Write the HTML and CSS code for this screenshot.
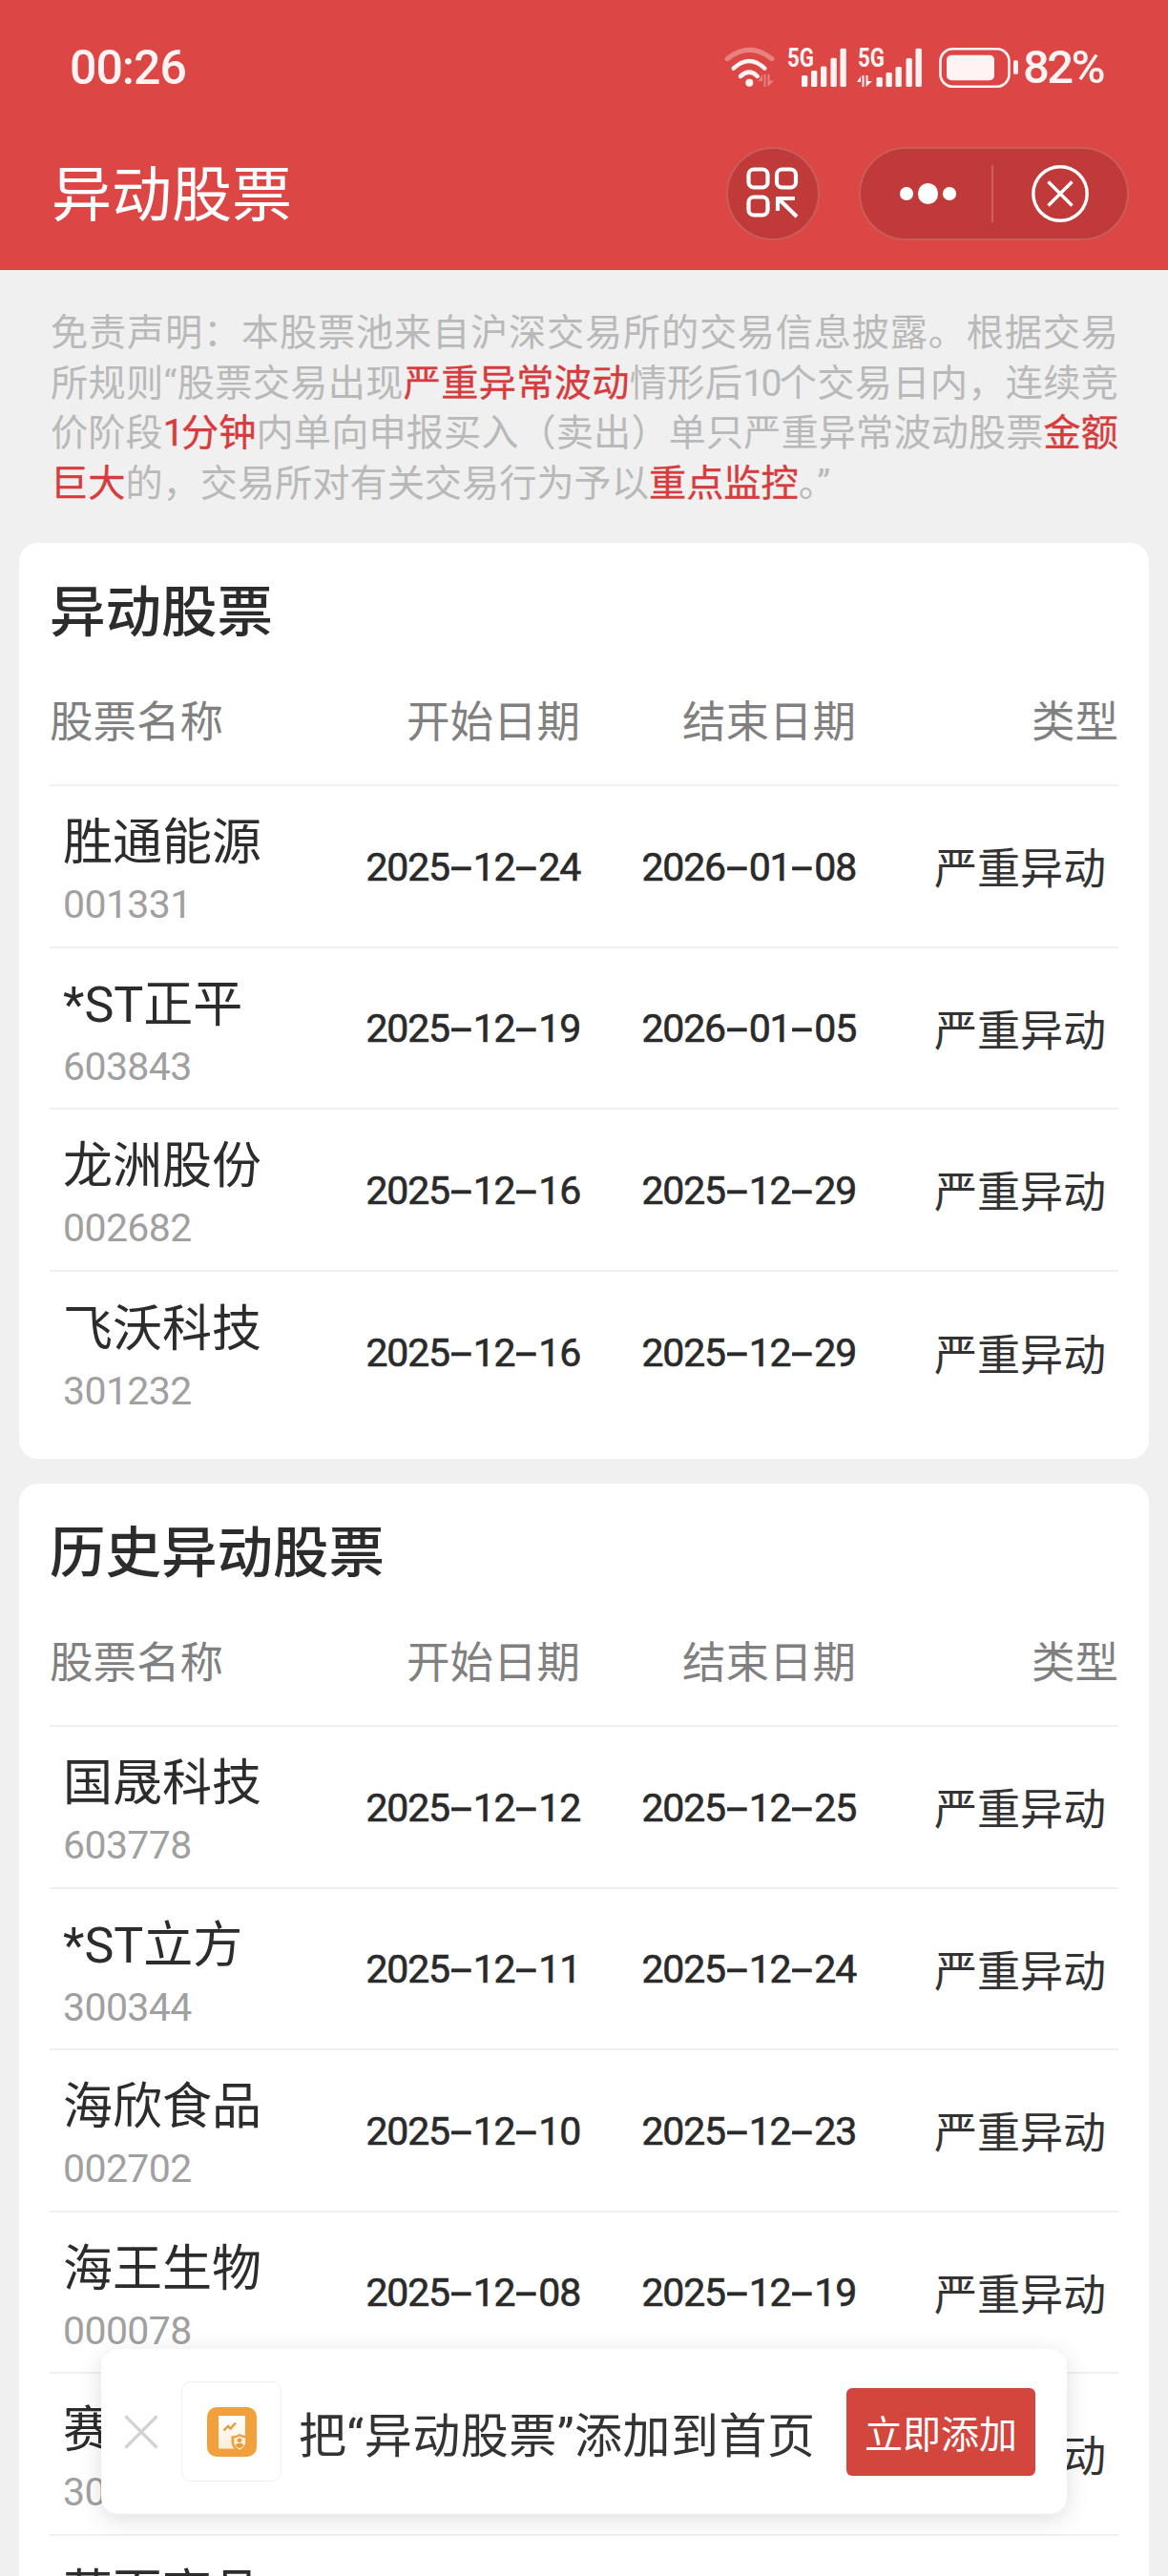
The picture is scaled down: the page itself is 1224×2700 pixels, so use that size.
FILE: index.html
```html
<!DOCTYPE html>
<html lang="zh-CN">
<head>
<meta charset="utf-8">
<title>异动股票</title>
<link rel="stylesheet" href="styles.css">
</head>
<body>
<div class="page">
  <header class="header">
    <div class="status">
      <span class="time">00:26</span>
      <div class="status-icons">
        <svg class="ic-wifi" width="56" height="42" viewBox="0 0 56 42">
          <path d="M4 11.7Q27.5-7 51 11.7" fill="none" stroke="#fff3f3" stroke-width="5" stroke-linecap="round" opacity=".35"/>
          <path d="M10.7 21.7Q27.3 6.3 43.3 21.7" fill="none" stroke="#fff3f3" stroke-width="4.5" stroke-linecap="round"/>
          <path d="M18 30Q27.3 21.4 35.7 30" fill="none" stroke="#fff3f3" stroke-width="4.5" stroke-linecap="round"/>
          <circle cx="27.3" cy="36.7" r="4" fill="#fff3f3"/>
          <path d="M42.5 28V41H44.5V28ZM41 28L36.5 35H41ZM46.5 28V41L53 34.5H48.5V28Z" fill="#fff3f3" opacity=".35"/>
        </svg>
        <svg class="ic-sig" width="62" height="42" viewBox="0 0 62 42">
          <text x="0" y="20" class="five-g" textLength="28" lengthAdjust="spacingAndGlyphs">5G</text>
          <rect x="15" y="29" width="6.3" height="12" rx="1.5" fill="#fff3f3"/>
          <rect x="25" y="24" width="6.3" height="17" rx="1.5" fill="#fff3f3"/>
          <rect x="35" y="19.5" width="6.3" height="21.5" rx="1.5" fill="#fff3f3"/>
          <rect x="45.5" y="10.7" width="6.3" height="30.3" rx="1.5" fill="#fff3f3"/>
          <rect x="55.5" y="0.7" width="6.3" height="40.3" rx="1.5" fill="#fff3f3"/>
        </svg>
        <svg class="ic-sig" width="70" height="42" viewBox="0 0 70 42">
          <text x="1" y="20" class="five-g" textLength="28" lengthAdjust="spacingAndGlyphs">5G</text>
          <path d="M5.5 29V41H7.5V29ZM4 30L0 36H4ZM9.5 29V41L16 35H11.5V29Z" fill="#fff3f3"/>
          <rect x="20.5" y="31" width="6.3" height="10" rx="1.5" fill="#fff3f3"/>
          <rect x="30.5" y="26" width="6.3" height="15" rx="1.5" fill="#fff3f3"/>
          <rect x="40.5" y="20" width="6.3" height="21" rx="1.5" fill="#fff3f3"/>
          <rect x="51.5" y="11" width="6.3" height="30" rx="1.5" fill="#fff3f3"/>
          <rect x="61.5" y="0.7" width="6.3" height="40.3" rx="1.5" fill="#fff3f3"/>
        </svg>
        <svg class="ic-bat" width="84" height="42" viewBox="0 0 84 42">
          <rect x="1.5" y="1.2" width="72" height="39.6" rx="13" fill="none" stroke="#fff3f3" stroke-width="2.6"/>
          <rect x="8" y="7.7" width="50" height="26.6" rx="5" fill="#fff3f3"/>
          <rect x="78" y="13" width="5" height="15" rx="2.5" fill="#fff3f3"/>
        </svg>
        <span class="pct">82%</span>
      </div>
    </div>
    <div class="nav">
      <h1 class="nav-title">异动股票</h1>
      <div class="nav-actions">
        <div class="round-btn">
          <svg width="56" height="56" viewBox="0 0 56 56" fill="none" stroke="#fff" stroke-width="4.2">
            <rect x="2.5" y="2.5" width="20" height="19" rx="5.5"/>
            <rect x="32" y="2.5" width="20" height="19" rx="5.5"/>
            <rect x="2.5" y="31.5" width="20" height="19" rx="5.5"/>
            <path d="M31.5 33H51M33 31.5V46M33.5 33L53 52"/>
          </svg>
        </div>
        <div class="capsule">
          <div class="cap-dots">
            <span class="dot"></span><span class="dot big"></span><span class="dot"></span>
          </div>
          <span class="cap-sep"></span>
          <div class="cap-close">
            <svg width="60" height="60" viewBox="0 0 60 60" fill="none" stroke="#fff" stroke-width="3.4">
              <circle cx="30" cy="30" r="28.2"/>
              <path d="M17.5 17.5L42.5 42.5M42.5 17.5L17.5 42.5"/>
            </svg>
          </div>
        </div>
      </div>
    </div>
  </header>

  <p class="notice">免责声明&#xFF1A;本股票池来自沪深交易所的交易信息披露&#x3002;根据交易所规则&#x201C;股票交易出现<em>严重异常波动</em>情形后<span class="num">10</span>个交易日内&#xFF0C;连续竞价阶段<em><span class="num">1</span>分钟</em>内单向申报买入&#xFF08;卖出&#xFF09;单只严重异常波动股票<em>金额巨大</em>的&#xFF0C;交易所对有关交易行为予以<em>重点监控</em>&#x3002;&#x201D;</p>

  <section class="card">
    <h2 class="card-title">异动股票</h2>
    <div class="grid thead"><span>股票名称</span><span>开始日期</span><span>结束日期</span><span>类型</span></div>
    <div class="grid row">
      <div class="stock"><span class="name">胜通能源</span><span class="code">001331</span></div>
      <span class="date">2025<i>-</i>12<i>-</i>24</span><span class="date">2026<i>-</i>01<i>-</i>08</span><span class="type">严重异动</span>
    </div>
    <div class="grid row">
      <div class="stock"><span class="name">*ST正平</span><span class="code">603843</span></div>
      <span class="date">2025<i>-</i>12<i>-</i>19</span><span class="date">2026<i>-</i>01<i>-</i>05</span><span class="type">严重异动</span>
    </div>
    <div class="grid row">
      <div class="stock"><span class="name">龙洲股份</span><span class="code">002682</span></div>
      <span class="date">2025<i>-</i>12<i>-</i>16</span><span class="date">2025<i>-</i>12<i>-</i>29</span><span class="type">严重异动</span>
    </div>
    <div class="grid row">
      <div class="stock"><span class="name">飞沃科技</span><span class="code">301232</span></div>
      <span class="date">2025<i>-</i>12<i>-</i>16</span><span class="date">2025<i>-</i>12<i>-</i>29</span><span class="type">严重异动</span>
    </div>
  </section>

  <section class="card">
    <h2 class="card-title">历史异动股票</h2>
    <div class="grid thead"><span>股票名称</span><span>开始日期</span><span>结束日期</span><span>类型</span></div>
    <div class="grid row">
      <div class="stock"><span class="name">国晟科技</span><span class="code">603778</span></div>
      <span class="date">2025<i>-</i>12<i>-</i>12</span><span class="date">2025<i>-</i>12<i>-</i>25</span><span class="type">严重异动</span>
    </div>
    <div class="grid row">
      <div class="stock"><span class="name">*ST立方</span><span class="code">300344</span></div>
      <span class="date">2025<i>-</i>12<i>-</i>11</span><span class="date">2025<i>-</i>12<i>-</i>24</span><span class="type">严重异动</span>
    </div>
    <div class="grid row">
      <div class="stock"><span class="name">海欣食品</span><span class="code">002702</span></div>
      <span class="date">2025<i>-</i>12<i>-</i>10</span><span class="date">2025<i>-</i>12<i>-</i>23</span><span class="type">严重异动</span>
    </div>
    <div class="grid row">
      <div class="stock"><span class="name">海王生物</span><span class="code">000078</span></div>
      <span class="date">2025<i>-</i>12<i>-</i>08</span><span class="date">2025<i>-</i>12<i>-</i>19</span><span class="type">严重异动</span>
    </div>
    <div class="grid row">
      <div class="stock"><span class="name">赛微电子</span><span class="code">300456</span></div>
      <span class="date">2025<i>-</i>12<i>-</i>05</span><span class="date">2025<i>-</i>12<i>-</i>18</span><span class="type">严重异动</span>
    </div>
    <div class="grid row">
      <div class="stock"><span class="name">萃百高品</span><span class="code">300000</span></div>
      <span class="date">2025<i>-</i>12<i>-</i>04</span><span class="date">2025<i>-</i>12<i>-</i>17</span><span class="type">严重异动</span>
    </div>
  </section>

  <aside class="toast">
    <svg class="toast-x" width="38" height="38" viewBox="0 0 38 38" fill="none" stroke="#d2d2d2" stroke-width="3.2"><path d="M2.5 2.5L35.5 35.5M35.5 2.5L2.5 35.5"/></svg>
    <div class="app-box">
      <svg width="52" height="52" viewBox="0 0 52 52">
        <defs><linearGradient id="doc" x1="0" y1="0" x2="0" y2="1"><stop offset="0" stop-color="#fff"/><stop offset="1" stop-color="#fdeedb"/></linearGradient></defs>
        <rect width="52" height="52" rx="10" fill="#f1a03b"/>
        <rect x="12" y="9" width="28" height="34.5" fill="url(#doc)"/>
        <path d="M17.5 24.5L22 20L24.5 22.5L30 16.5" fill="none" stroke="#e99a3b" stroke-width="2.4"/>
        <path d="M25.5 30.5Q31 30 34 28Q37.5 30 43 30.5V37Q42.5 43.5 34 47.5Q26 43.5 25.5 37Z" fill="#f1a03b"/>
        <path d="M28.2 32.5Q31.5 32 34 30.5Q37 32 40.3 32.5V37Q40 41.5 34 44.7Q28.5 41.5 28.2 37Z" fill="#fdeedb"/>
        <circle cx="34" cy="34.8" r="2.3" fill="#e99a3b"/>
        <path d="M29.8 40.5Q30.5 37.8 34 37.8Q37.5 37.8 38.5 40.5L34 43.2Z" fill="#e99a3b"/>
      </svg>
    </div>
    <span class="toast-text">把&#x201C;异动股票&#x201D;添加到首页</span>
    <span class="toast-btn">立即添加</span>
  </aside>
</div>
</body>
</html>
```

FILE: styles.css
```css
* { box-sizing: border-box; }
html, body { margin: 0; padding: 0; }
body {
  background: #f0f0f0;
  font-family: Roboto, "Noto Sans CJK SC", sans-serif;
}
.page {
  position: relative;
  width: 1224px;
  height: 2700px;
  overflow: hidden;
  background: #f0f0f0;
}
svg { overflow: visible; }

/* header */
.header {
  height: 283px;
  background: #dc4644;
  padding-top: 50px;
  color: #fff;
}
.status {
  display: flex;
  justify-content: space-between;
  align-items: center;
  height: 42px;
  padding: 0 68px 0 73px;
}
.time {
  font-size: 50px;
  font-weight: 500;
  letter-spacing: -1px;
  line-height: 44px;
  color: #fff3f3;
}
.status-icons {
  display: flex;
  align-items: center;
}
.ic-wifi { margin-right: 11px; }
.ic-sig { margin-right: 11px; }
.ic-sig + .ic-sig { margin-right: 16px; }
.ic-bat { margin-right: 4px; }
.pct {
  font-size: 49px;
  font-weight: 500;
  letter-spacing: -2.6px;
  line-height: 42px;
  color: #fff3f3;
}
.five-g {
  font-family: Roboto, sans-serif;
  font-size: 27px;
  font-weight: 700;
  fill: #fff3f3;
}
.nav {
  display: flex;
  justify-content: space-between;
  align-items: center;
  height: 98px;
  margin-top: 62px;
  padding: 0 41px 0 54px;
}
.nav-title {
  margin: 0;
  padding-top: 4px;
  font-size: 63px;
  font-weight: 400;
  line-height: 98px;
}
.nav-actions {
  display: flex;
  gap: 41px;
}
.round-btn, .capsule {
  height: 98px;
  background: #bf3a38;
  border: 2px solid rgba(255, 255, 255, .18);
  border-radius: 49px;
  display: flex;
  align-items: center;
  justify-content: center;
}
.round-btn { width: 98px; }
.capsule { width: 283px; justify-content: flex-start; }
.cap-dots {
  display: flex;
  align-items: center;
  justify-content: center;
  width: 137px;
  padding-left: 4px;
  gap: 5px;
}
.dot {
  width: 13.5px;
  height: 13.5px;
  border-radius: 50%;
  background: #fff;
}
.dot.big { width: 21.5px; height: 21.5px; }
.cap-sep {
  width: 2px;
  height: 60px;
  background: rgba(255, 255, 255, .2);
}
.cap-close {
  flex: 1;
  display: flex;
  align-items: center;
  justify-content: center;
}

/* notice */
.notice {
  margin: 0;
  padding: 40px 52px 36px 53px;
  font-size: 39.2px;
  line-height: 52.5px;
  text-align: justify;
  color: #b9b9b9;
}
.notice em {
  font-style: normal;
  -webkit-text-stroke: .35px #d63c3e;
  color: #d63c3e;
}
.num { letter-spacing: -3px; }

/* cards */
.card {
  margin: 0 20px 26px;
  padding: 31px 32px 27px;
  background: #fff;
  border-radius: 20px;
}
.card-title {
  margin: 0;
  font-size: 58.5px;
  font-weight: 500;
  line-height: 84px;
  color: #2c2c2c;
}
.grid {
  display: grid;
  grid-template-columns: 328px 228px 289px 275px;
  align-items: center;
}
.thead {
  height: 140px;
  border-bottom: 2px solid #f0f0f0;
  font-size: 45.5px;
  color: #808080;
}
.thead span { text-align: right; }
.thead span:first-child { text-align: left; }
.row {
  height: 169.5px;
  border-bottom: 2px solid #f0f0f0;
}
.row:last-child { border-bottom: 0; }
.stock {
  display: flex;
  flex-direction: column;
  padding-left: 14px;
  margin-top: 7px;
}
.name {
  font-size: 52px;
  line-height: 68px;
  color: #2c2c2c;
}
.code {
  margin-top: 6px;
  font-size: 41px;
  line-height: 48px;
  letter-spacing: -.6px;
  color: #a0a0a0;
}
.date {
  text-align: right;
  white-space: nowrap;
  font-size: 41px;
  font-weight: 400;
  letter-spacing: -1.2px;
  -webkit-text-stroke: .6px #2a2a2a;
  color: #2a2a2a;
}
.date i {
  display: inline-block;
  margin: 0 3px;
  font-family: Inter, sans-serif;
  font-style: normal;
  letter-spacing: 0;
  transform: scaleX(1.5);
}
.type {
  text-align: right;
  padding-right: 13px;
  font-size: 45px;
  color: #333;
}

/* toast */
.toast {
  position: absolute;
  left: 106px;
  top: 2462px;
  width: 1012px;
  height: 173px;
  display: flex;
  align-items: center;
  background: #fff;
  border-radius: 18px;
  box-shadow: 0 6px 26px rgba(0, 0, 0, .13);
}
.toast-x { margin-left: 23px; flex: none; }
.app-box {
  width: 105px;
  height: 105px;
  margin-left: 23px;
  flex: none;
  display: flex;
  align-items: center;
  justify-content: center;
  border: 1.5px solid #efefef;
  border-radius: 10px;
}
.toast-text {
  margin-left: 18px;
  flex: 1;
  font-size: 50px;
  letter-spacing: .5px;
  color: #333;
}
.toast-btn {
  width: 198px;
  height: 92px;
  margin-right: 33px;
  display: flex;
  align-items: center;
  justify-content: center;
  background: #d2463e;
  border-radius: 6px;
  color: #fff;
  font-size: 40px;
}
```
